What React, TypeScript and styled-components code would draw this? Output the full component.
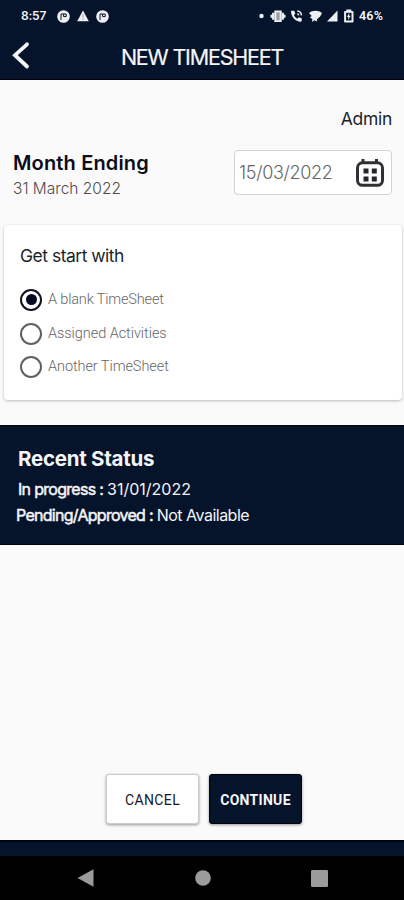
import React, { useState } from 'react';
import styled, { createGlobalStyle } from 'styled-components';

const navy = '#05132b';

const GlobalStyle = createGlobalStyle`
  * { box-sizing: border-box; }
  body { margin: 0; background: #fafafa; }
  button, input { font: inherit; }
`;

const Screen = styled.div`
  width: 404px;
  height: 900px;
  display: flex;
  flex-direction: column;
  overflow: hidden;
  background: #fafafa;
  color: #1c1f2b;
  font-family: Inter, sans-serif;
`;

const Header = styled.header`
  height: 80px;
  flex: none;
  background: ${navy};
  border-bottom: 1px solid #01040b;
  color: #f4f5f7;
`;

const StatusBar = styled.div`
  height: 32px;
  display: flex;
  align-items: center;
  padding: 0 20px 0 21px;
`;

const Clock = styled.span`
  width: 36px;
  font: 600 12px/14px Inter, sans-serif;
  letter-spacing: -0.2px;
  white-space: nowrap;
`;

const Notifications = styled.div`
  display: flex;
  align-items: center;
  gap: 7px;
  flex: 1;
  svg { display: block; }
`;

const SystemIcons = styled.div`
  display: flex;
  align-items: center;
  svg { display: block; }
`;

const Battery = styled.span`
  width: 25px;
  margin-left: 5px;
  font: 600 12.5px/14px Roboto, sans-serif;
  letter-spacing: 0.2px;
  white-space: nowrap;
`;

const TitleBar = styled.div`
  height: 47px;
  display: grid;
  grid-template-columns: 42px 1fr 42px;
  align-items: center;
`;

const BackButton = styled.button`
  border: 0;
  padding: 0 0 0 11px;
  background: none;
  color: inherit;
  svg { display: block; }
`;

const Title = styled.h1`
  margin: 2px 0 0;
  text-align: center;
  font: 400 21.5px/26px Inter, sans-serif;
  letter-spacing: -1.2px;
  -webkit-text-stroke: 0.2px currentColor;
  white-space: nowrap;
`;

const Account = styled.div`
  height: 70px;
  padding: 27px 12px 0 0;
  text-align: right;
  font-size: 17.5px;
  line-height: 24px;
  letter-spacing: -0.3px;
`;

const Period = styled.section`
  height: 75px;
  display: flex;
  justify-content: space-between;
  padding: 0 12px 0 13px;
`;

const PeriodTitle = styled.h2`
  margin: 1px 0 0;
  color: #0b0d1a;
  font: 600 20px/25px Inter, sans-serif;
  letter-spacing: 0.15px;
`;

const PeriodDate = styled.div`
  font-size: 15.5px;
  line-height: 26px;
  font-weight: 300;
  letter-spacing: 0;
  color: #4c4c4c;
`;

const DateField = styled.button`
  width: 158px;
  height: 45px;
  display: flex;
  align-items: center;
  justify-content: space-between;
  padding: 0 6px 0 4px;
  border: 1px solid #d2d2d2;
  border-radius: 4px;
  background: #fff;
  color: #666;
  font-size: 18px;
  font-weight: 300;
  letter-spacing: -0.3px;
`;

const Card = styled.section`
  height: 175px;
  flex: none;
  margin: 0 2px 0 4px;
  padding: 18px 16px 0;
  background: #fff;
  border-radius: 4px;
  box-shadow: 0 1px 3px rgba(0, 0, 0, 0.25);
`;

const CardTitle = styled.h3`
  margin: 0 0 15px;
  padding-top: 1px;
  font: 400 17.5px/24px Inter, sans-serif;
  letter-spacing: -0.5px;
`;

const Option = styled.button<{ $spacing: number }>`
  height: 33.7px;
  display: flex;
  align-items: center;
  gap: 6px;
  padding: 0;
  border: 0;
  background: none;
  font: 300 14.5px/18px Roboto, sans-serif;
  letter-spacing: ${(p) => p.$spacing}px;
  color: #666;
`;

const Radio = styled.span<{ $checked: boolean }>`
  width: 22px;
  height: 22px;
  display: grid;
  place-items: center;
  border: 2px solid ${(p) => (p.$checked ? '#10131c' : '#606060')};
  border-radius: 50%;
  &::after {
    content: '';
    width: 11px;
    height: 11px;
    border-radius: 50%;
    background: ${(p) => (p.$checked ? '#050b22' : 'transparent')};
  }
`;

const Status = styled.section`
  height: 120px;
  flex: none;
  margin-top: 25px;
  padding: 20px 16px 0;
  background: ${navy};
  border: solid #01040b;
  border-width: 1px 0;
  color: #f4f5f7;
`;

const StatusTitle = styled.h2`
  margin: 0 0 4px 2px;
  font: 700 20.5px/26px Inter, sans-serif;
  letter-spacing: -0.25px;
`;

const StatusLine = styled.div<{ $indent: number; $spacing: number }>`
  margin-left: ${(p) => p.$indent}px;
  font-size: 16px;
  line-height: 26px;
  letter-spacing: ${(p) => p.$spacing}px;
  white-space: pre;
`;

const StatusLabel = styled.span<{ $spacing: number }>`
  letter-spacing: ${(p) => p.$spacing}px;
  -webkit-text-stroke: 0.5px currentColor;
`;

const Actions = styled.div`
  flex: 1;
  display: flex;
  align-items: flex-end;
  justify-content: center;
  gap: 10px;
  padding: 0 0 16px 4px;
`;

const ActionButton = styled.button<{ $primary?: boolean }>`
  width: 93px;
  height: 50px;
  padding: 2px 0 0;
  border: 1px solid ${(p) => (p.$primary ? '#01040b' : '#ccc')};
  border-radius: 3px;
  background: ${(p) => (p.$primary ? navy : '#fff')};
  color: ${(p) => (p.$primary ? '#f4f5f7' : '#15182a')};
  box-shadow: 0 1px 3px rgba(0, 0, 0, 0.4);
  font: ${(p) => (p.$primary ? 700 : 400)} 14px/18px Roboto, sans-serif;
  letter-spacing: ${(p) => (p.$primary ? 0.3 : 0.4)}px;
`;

const Footer = styled.div`
  height: 16px;
  flex: none;
  background: ${navy};
  border-top: 2px solid #01040b;
`;

const NavBar = styled.nav`
  height: 44px;
  flex: none;
  display: flex;
  align-items: center;
  justify-content: space-between;
  padding: 0 76px 0 77px;
  background: #000;
  svg { display: block; }
`;

const AppBadge = () => (
  <svg width="13" height="13" viewBox="0 0 13 13">
    <circle cx="6.5" cy="6.5" r="6.3" fill="#eef0f3" />
    <path d="M4 10V4h5.2v2.6H6.6V4" fill="none" stroke={navy} strokeWidth="1" />
  </svg>
);

const WarningIcon = () => (
  <svg width="12" height="12" viewBox="0 0 12 12">
    <path d="M6 .5 11.8 11.3H.2Z" fill="#eef0f3" />
    <path d="M6 4.5v3M6 8.5v1.2" stroke="#7d8594" strokeWidth=".9" />
  </svg>
);

const SystemStatus = () => (
  <svg width="96" height="16" viewBox="258.5 7.5 96 16" fill="#eef0f3">
    <circle cx="262" cy="15.5" r="2.2" />
    <path d="M274.8 10h7.4v11.6h-7.4zM272.6 12.2h2v7h-2zM271 14.3h1.6v3H271zM282.4 12.2h2v7h-2zM284.4 14.3h1.6v3h-1.6z" />
    <path d="M276.8 11.8h3.4v8h-3.4z" fill="#9ba2af" />
    <path d="M292.5 10.2h2.3l1 3-1.4 1.4c.7 1.6 1.9 2.8 3.4 3.6l1.4-1.4 3 1v2.5c0 .6-.4.9-1 .9-5.3-.2-9.2-4.6-9.7-10 0-.5.4-1 1-1Z" />
    <path d="M297.8 10.5c2.4.2 4 1.9 4.2 4.4M297.8 13.3c.8.1 1.3.7 1.4 1.6" fill="none" stroke="#eef0f3" strokeWidth="1.5" />
    <path d="M309.5 12.5c3.4-3.1 9.4-3.1 13 0-1 2.6-2.5 4.5-4.8 6l-.5 2.6-2.2-1.3-2.6 1.6.5-2.8-2.5-1.5 1.8-1.6Z" />
    <path d="M338 10v11h-10.5Z" />
    <path d="M346.8 9h5v1.5h1.3a.9.9 0 0 1 .9.9v9.7a.9.9 0 0 1-.9.9h-7.6a.9.9 0 0 1-.9-.9v-9.7c0-.5.4-.9.9-.9h1.3Z" />
    <path d="M346.6 12.3h5.4v7.7h-5.4z" fill={navy} />
    <path d="m349.8 12.2-2.4 4.4h1.5l-.4 3.2 2.7-4.5h-1.6Z" />
  </svg>
);

const CalendarIcon = () => (
  <svg width="30" height="30" viewBox="0 0 30 30" fill="none" stroke="#303134">
    <rect x="2.5" y="4.8" width="25" height="22.5" rx="5" strokeWidth="3" />
    <path d="M8 1v4M21.5 1v4" strokeWidth="3" />
    <path d="M8.5 10.5h5v5h-5zM16.8 10.5h5v5h-5zM8.5 18.5h5v5h-5zM16.8 18.5h5v5h-5z" fill="#25262a" stroke="none" />
  </svg>
);

const options = [
  { label: 'A blank TimeSheet', spacing: -0.16 },
  { label: 'Assigned Activities', spacing: -0.05 },
  { label: 'Another TimeSheet', spacing: -0.07 },
];

export default function App() {
  const [selected, setSelected] = useState(0);
  return (
    <Screen>
      <GlobalStyle />
      <Header>
        <StatusBar>
          <Clock>8:57</Clock>
          <Notifications>
            <AppBadge />
            <WarningIcon />
            <AppBadge />
          </Notifications>
          <SystemIcons>
            <SystemStatus />
            <Battery>46%</Battery>
          </SystemIcons>
        </StatusBar>
        <TitleBar>
          <BackButton aria-label="Back">
            <svg width="20" height="30" viewBox="0 0 20 30">
              <path d="M16 3.3 4 14.2l12 11.3" fill="none" stroke="currentColor" strokeWidth="3.8" strokeLinecap="round" />
            </svg>
          </BackButton>
          <Title>NEW TIMESHEET</Title>
        </TitleBar>
      </Header>
      <Account>Admin</Account>
      <Period>
        <div>
          <PeriodTitle>Month Ending</PeriodTitle>
          <PeriodDate>31 March 2022</PeriodDate>
        </div>
        <DateField>
          15/03/2022
          <CalendarIcon />
        </DateField>
      </Period>
      <Card>
        <CardTitle>Get start with</CardTitle>
        {options.map((option, i) => (
          <Option
            key={option.label}
            $spacing={option.spacing}
            role="radio"
            aria-checked={selected === i}
            onClick={() => setSelected(i)}
          >
            <Radio $checked={selected === i} />
            {option.label}
          </Option>
        ))}
      </Card>
      <Status>
        <StatusTitle>Recent Status</StatusTitle>
        <StatusLine $indent={2} $spacing={0}>
          <StatusLabel $spacing={-0.7}>In progress : </StatusLabel>31/01/2022
        </StatusLine>
        <StatusLine $indent={0} $spacing={-0.5}>
          <StatusLabel $spacing={-0.72}>Pending/Approved : </StatusLabel>Not Available
        </StatusLine>
      </Status>
      <Actions>
        <ActionButton>CANCEL</ActionButton>
        <ActionButton $primary>CONTINUE</ActionButton>
      </Actions>
      <Footer />
      <NavBar>
        <svg width="17" height="18" viewBox="0 0 17 18"><path d="M.5 9 16.5.3v17.4Z" fill="#9b9b9b" /></svg>
        <svg width="16" height="16" viewBox="0 0 16 16"><circle cx="8" cy="8" r="7.8" fill="#9b9b9b" /></svg>
        <svg width="17" height="17" viewBox="0 0 17 17"><rect width="17" height="17" rx="1.2" fill="#9b9b9b" /></svg>
      </NavBar>
    </Screen>
  );
}
